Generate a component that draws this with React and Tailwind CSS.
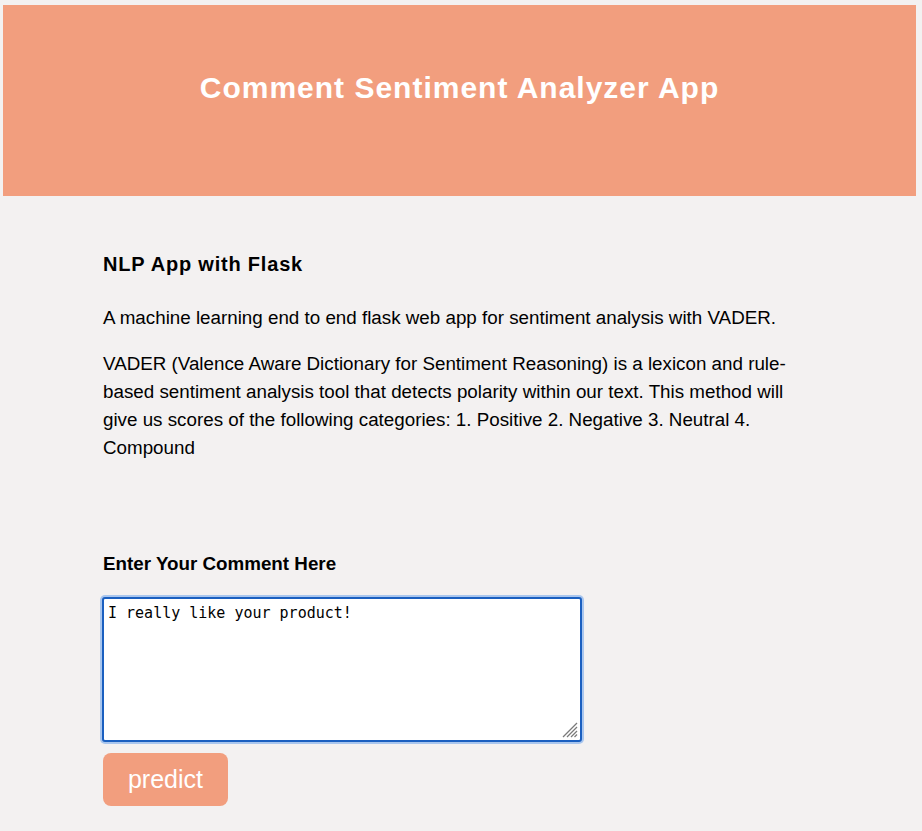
export default function App() {
  return (
    <div className="min-h-[831px] bg-[#f3f1f1] pt-[5px] pb-6" style={{ fontFamily: '"Liberation Sans", Arial, sans-serif' }}>
      <header className="ml-[3px] mr-[6px] h-[191px] bg-[#f29e7e] pt-[64px] text-center">
        <h1 className="text-[30px] font-black leading-[38px] text-white tracking-[1px]">Comment Sentiment Analyzer App</h1>
      </header>
      <main className="mx-auto w-[716px] pt-[55px] text-black">
        <h2 className="text-[20px] font-bold leading-[26px] tracking-[0.8px]">NLP App with Flask</h2>
        <p className="mt-[27px] text-[18.8px] leading-[28px]">A machine learning end to end flask web app for sentiment analysis with VADER.</p>
        <p className="mt-[18px] text-[18.8px] leading-[28px]">VADER (Valence Aware Dictionary for Sentiment Reasoning) is a lexicon and rule-based sentiment analysis tool that detects polarity within our text. This method will give us scores of the following categories: 1. Positive 2. Negative 3. Neutral 4. Compound</p>
        <h3 className="mt-[90px] text-[18.8px] font-bold leading-[24px]">Enter Your Comment Here</h3>
        <div className="relative mt-[21px] -ml-px w-[480px]">
          <textarea
            className="block h-[145px] w-[480px] resize-none rounded-[3px] border-2 border-[#1a5fc0] bg-white px-[4px] pt-[4px] text-[15px] leading-[20px] text-black outline-none ring-2 ring-[#a9c6ee]"
            style={{ fontFamily: '"DejaVu Sans Mono", "Liberation Mono", monospace' }}
            defaultValue="I really like your product!"
          />
          <svg className="pointer-events-none absolute bottom-[4px] right-[4px]" width="16" height="16" viewBox="0 0 16 16">
            <g stroke="#7a7a7a" strokeWidth="1.2">
              <line x1="1" y1="15" x2="15" y2="1" />
              <line x1="5" y1="15" x2="15" y2="5" />
              <line x1="9" y1="15" x2="15" y2="9" />
              <line x1="12.5" y1="15" x2="15" y2="12.5" />
            </g>
          </svg>
        </div>
        <button className="mt-[11px] h-[53px] w-[125px] rounded-[8px] bg-[#f29e7e] text-[25px] text-white">predict</button>
      </main>
    </div>
  );
}
